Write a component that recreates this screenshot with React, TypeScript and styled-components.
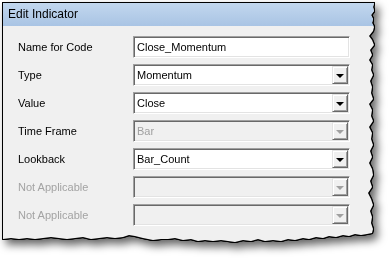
import React from "react";
import styled, { createGlobalStyle } from "styled-components";

const GlobalStyle = createGlobalStyle`
    html, body {
        margin: 0;
        padding: 0;
        background: #ffffff;
    }
    body {
        font-family: "Liberation Sans", Arial, sans-serif;
    }
`;

// torn-paper edge: right side going down, then bottom going left
const tornEdge: [number, number][] = [
    [371, 0], [370, 4], [371, 8], [368, 12], [370, 16], [369, 20], [371, 24], [370, 28],
    [366, 33], [369, 37], [371, 42], [367, 47], [369, 52], [366, 57], [369, 62], [368, 67],
    [370, 72], [367, 78], [369, 84], [368, 90], [370, 96], [366, 101], [369, 107], [368, 113],
    [370, 118], [366, 124], [369, 130], [368, 136], [370, 142], [367, 148], [369, 154], [366, 160],
    [369, 166], [370, 172], [367, 178], [369, 184], [365, 190], [368, 196], [370, 202], [367, 208],
    [369, 214], [368, 220], [370, 226], [369, 230],
    [364, 231], [358, 232], [352, 231], [346, 233], [340, 232], [333, 234], [326, 233], [320, 235],
    [313, 234], [306, 236], [300, 235], [292, 237], [285, 236], [278, 238], [270, 237], [262, 238],
    [255, 236], [248, 238], [240, 237], [232, 239], [225, 238], [218, 237], [210, 238], [202, 237],
    [195, 238], [188, 236], [180, 237], [172, 235], [165, 236], [158, 236], [150, 237], [140, 235],
    [132, 233], [126, 232], [120, 234], [112, 235], [104, 234], [96, 235], [88, 236], [80, 234],
    [72, 235], [64, 236], [56, 235], [48, 234], [40, 235], [32, 236], [24, 235], [16, 236],
    [8, 235], [0, 236],
];

const tornClip = `polygon(0 0, ${tornEdge.map(([x, y]) => `${x}px ${y}px`).join(", ")})`;

interface Field {
    label: string;
    value: string;
    kind: "text" | "combo";
    disabled?: boolean;
    labelGrey?: boolean;
}

const fields: Field[] = [
    { label: "Name for Code", value: "Close_Momentum", kind: "text" },
    { label: "Type", value: "Momentum", kind: "combo" },
    { label: "Value", value: "Close", kind: "combo" },
    { label: "Time Frame", value: "Bar", kind: "combo", disabled: true },
    { label: "Lookback", value: "Bar_Count", kind: "combo" },
    { label: "Not Applicable", value: "", kind: "combo", disabled: true, labelGrey: true },
    { label: "Not Applicable", value: "", kind: "combo", disabled: true, labelGrey: true },
];

const App = () => {
    return (
        <>
            <GlobalStyle />
            <Page>
                <Shadow>
                    <Dialog>
                        <TitleBar>Edit Indicator</TitleBar>
                        <Body>
                            {fields.map((f, i) => (
                                <React.Fragment key={i}>
                                    <Label $disabled={f.labelGrey}>{f.label}</Label>
                                    <Input $disabled={f.disabled}>
                                        <InputText $disabled={f.disabled}>{f.value}</InputText>
                                        {f.kind === "combo" && (
                                            <DropButton>
                                                <Arrow $disabled={f.disabled} />
                                            </DropButton>
                                        )}
                                    </Input>
                                </React.Fragment>
                            ))}
                        </Body>
                    </Dialog>
                </Shadow>
            </Page>
        </>
    );
};

const Page = styled.div`
    width: 392px;
    height: 258px;
    padding: 3px 0 0 3px;
    box-sizing: border-box;
    background: #ffffff;
    overflow: hidden;
`;

const Shadow = styled.div`
    width: 372px;
    height: 240px;
    filter: drop-shadow(1px 0 0 #000) drop-shadow(-1px 0 0 #000) drop-shadow(0 1px 0 #000)
        drop-shadow(0 -1px 0 #000) drop-shadow(4px 5px 4px rgba(0, 0, 0, 0.6));
`;

const Dialog = styled.div`
    width: 372px;
    height: 240px;
    background: #f0f0f0;
    clip-path: ${tornClip};
    display: flex;
    flex-direction: column;
`;

const TitleBar = styled.div`
    height: 23px;
    flex: none;
    display: flex;
    align-items: center;
    padding: 0 0 1px 5px;
    box-sizing: border-box;
    background: linear-gradient(#c2d7ee, #a9c4e4);
    color: #000;
    font-size: 12px;
`;

const Body = styled.div`
    display: grid;
    grid-template-columns: 115px 217px;
    grid-auto-rows: 22px;
    row-gap: 6px;
    padding: 10px 0 0 15px;
`;

const Label = styled.div<{ $disabled?: boolean }>`
    display: flex;
    align-items: center;
    font-size: 11px;
    color: ${p => (p.$disabled ? "#a3a3a3" : "#000")};
`;

const Input = styled.div<{ $disabled?: boolean }>`
    display: flex;
    align-items: stretch;
    box-sizing: border-box;
    padding: 1px;
    background: ${p => (p.$disabled ? "#f0f0f0" : "#ffffff")};
    border-top: 1px solid #a0a0a0;
    border-left: 1px solid #a0a0a0;
    border-bottom: 1px solid #ffffff;
    border-right: 1px solid #ffffff;
    box-shadow: inset 1px 1px 0 #696969, inset -1px -1px 0 #e3e3e3;
`;

const InputText = styled.div<{ $disabled?: boolean }>`
    flex: 1;
    display: flex;
    align-items: center;
    padding-left: 2px;
    font-size: 11px;
    color: ${p => (p.$disabled ? "#a0a0a0" : "#000")};
    white-space: nowrap;
    overflow: hidden;
`;

const DropButton = styled.div`
    width: 16px;
    flex: none;
    display: flex;
    align-items: center;
    justify-content: center;
    box-sizing: border-box;
    background: #f0f0f0;
    border-top: 1px solid #e3e3e3;
    border-left: 1px solid #e3e3e3;
    border-bottom: 1px solid #696969;
    border-right: 1px solid #696969;
    box-shadow: inset 1px 1px 0 #ffffff, inset -1px -1px 0 #a0a0a0;
`;

const Arrow = styled.div<{ $disabled?: boolean }>`
    width: 0;
    height: 0;
    margin-top: 1px;
    border-left: 4px solid transparent;
    border-right: 4px solid transparent;
    border-top: 4px solid ${p => (p.$disabled ? "#a0a0a0" : "#000")};
`;

export default App;
